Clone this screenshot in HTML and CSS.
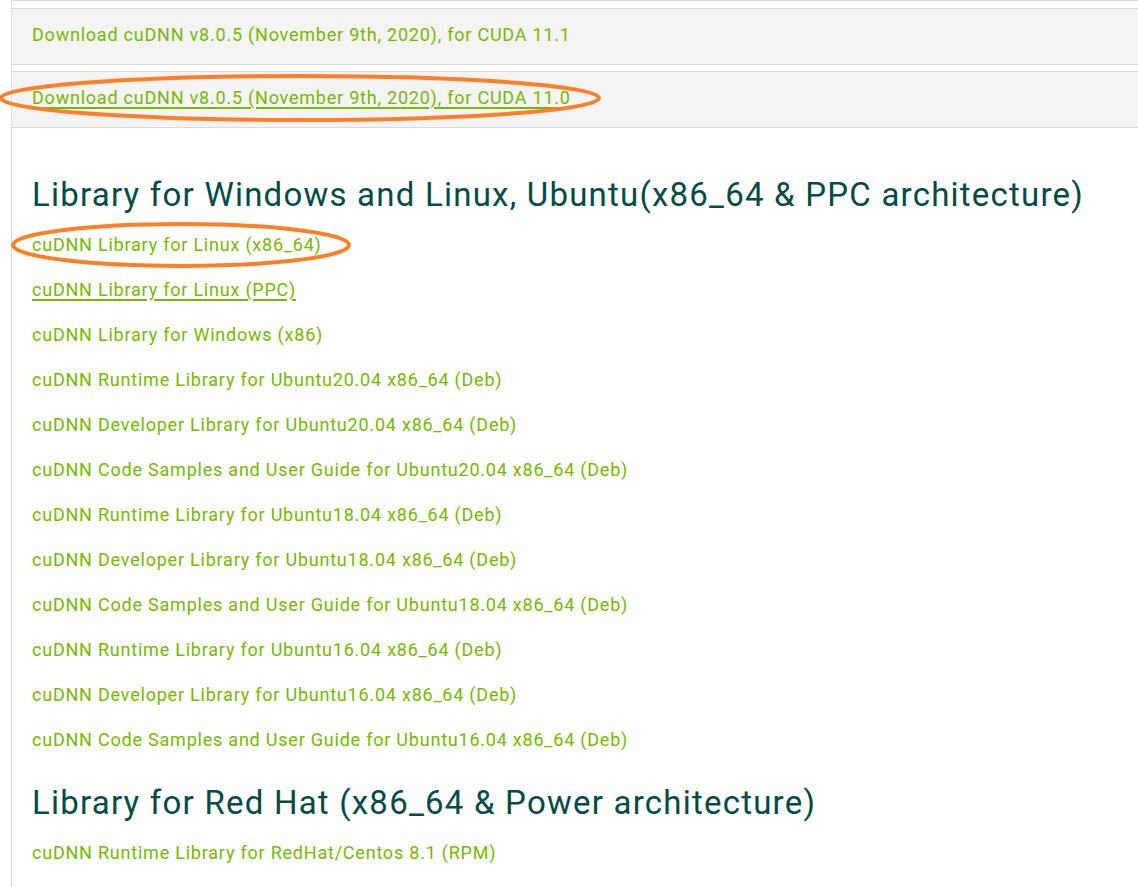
FILE: index.html
```html
<!DOCTYPE html>
<html lang="en">
<head>
<meta charset="utf-8">
<title>cuDNN Download</title>
<link rel="stylesheet" href="styles.css">
</head>
<body>
<div class="page">
  <div class="content">
    <div class="panel-prev"></div>
    <div class="panel"><a class="panel-link" href="#">Download cuDNN v8.0.5 (November 9th, 2020), for CUDA 11.1</a></div>
    <div class="panel"><a class="panel-link underlined" href="#">Download cuDNN v8.0.5 (November 9th, 2020), for CUDA 11.0</a></div>

    <h2 class="section-title first">Library for Windows and Linux, Ubuntu(x86_64 &amp; PPC architecture)</h2>
    <ul class="links">
      <li><a href="#">cuDNN Library for Linux (x86_64)</a></li>
      <li><a class="underlined" href="#">cuDNN Library for Linux (PPC)</a></li>
      <li><a href="#">cuDNN Library for Windows (x86)</a></li>
      <li><a href="#">cuDNN Runtime Library for Ubuntu20.04 x86_64 (Deb)</a></li>
      <li><a href="#">cuDNN Developer Library for Ubuntu20.04 x86_64 (Deb)</a></li>
      <li><a href="#">cuDNN Code Samples and User Guide for Ubuntu20.04 x86_64 (Deb)</a></li>
      <li><a href="#">cuDNN Runtime Library for Ubuntu18.04 x86_64 (Deb)</a></li>
      <li><a href="#">cuDNN Developer Library for Ubuntu18.04 x86_64 (Deb)</a></li>
      <li><a href="#">cuDNN Code Samples and User Guide for Ubuntu18.04 x86_64 (Deb)</a></li>
      <li><a href="#">cuDNN Runtime Library for Ubuntu16.04 x86_64 (Deb)</a></li>
      <li><a href="#">cuDNN Developer Library for Ubuntu16.04 x86_64 (Deb)</a></li>
      <li><a href="#">cuDNN Code Samples and User Guide for Ubuntu16.04 x86_64 (Deb)</a></li>
    </ul>

    <h2 class="section-title second">Library for Red Hat (x86_64 &amp; Power architecture)</h2>
    <ul class="links">
      <li><a href="#">cuDNN Runtime Library for RedHat/Centos 8.1 (RPM)</a></li>
    </ul>
  </div>

  <svg class="mark mark-one" width="606" height="52" viewBox="0 0 606 52">
    <ellipse cx="302" cy="25" rx="299" ry="22" fill="none" stroke="#ff7f27" stroke-width="4"/>
  </svg>
  <svg class="mark mark-two" width="346" height="52" viewBox="0 0 346 52">
    <ellipse cx="171" cy="25" rx="168" ry="21" fill="none" stroke="#ff7f27" stroke-width="4"/>
  </svg>
</div>
</body>
</html>
```

FILE: styles.css
```css
html, body {
  margin: 0;
  padding: 0;
  background: #ffffff;
}

.page {
  position: relative;
  width: 1138px;
  height: 887px;
  overflow: hidden;
}

.content {
  margin-left: 11px;
  border-left: 1px solid #dcdcdc;
  height: 887px;
  font-family: Roboto, "Liberation Sans", sans-serif;
}

.panel-prev {
  height: 0;
  border-bottom: 1px solid #dadada;
  background: #f4f4f4;
  margin-bottom: 7px;
}

.panel {
  background: #f4f4f4;
  border-top: 1px solid #dadada;
  border-bottom: 1px solid #dadada;
  height: 55px;
  display: flex;
  align-items: center;
  padding-left: 20px;
  margin-bottom: 6px;
}

.panel-link {
  color: #76b900;
  font-size: 18px;
  letter-spacing: 0.78px;
  text-decoration: none;
  line-height: 22px;
  margin-top: -3px;
}

a {
  color: #76b900;
  text-decoration: none;
}

.underlined {
  text-decoration: underline;
  text-decoration-thickness: 2px;
  text-underline-offset: 3px;
}

.section-title {
  margin: 0;
  padding-left: 20px;
  color: #024b47;
  font-size: 33px;
  font-weight: 400;
  letter-spacing: 1.22px;
  line-height: 40px;
  white-space: nowrap;
}

.section-title.first {
  margin-top: 47px;
  margin-bottom: 7px;
}

.section-title.second {
  margin-top: 21px;
  margin-bottom: 7px;
}

.links {
  list-style: none;
  margin: 0;
  padding: 0 0 0 20px;
}

.links li {
  height: 45px;
  line-height: 45px;
  font-size: 18px;
  letter-spacing: 0.78px;
  white-space: nowrap;
}

.mark {
  position: absolute;
  pointer-events: none;
}

.mark-one {
  left: -2px;
  top: 73px;
}

.mark-two {
  left: 10px;
  top: 220px;
}
```
